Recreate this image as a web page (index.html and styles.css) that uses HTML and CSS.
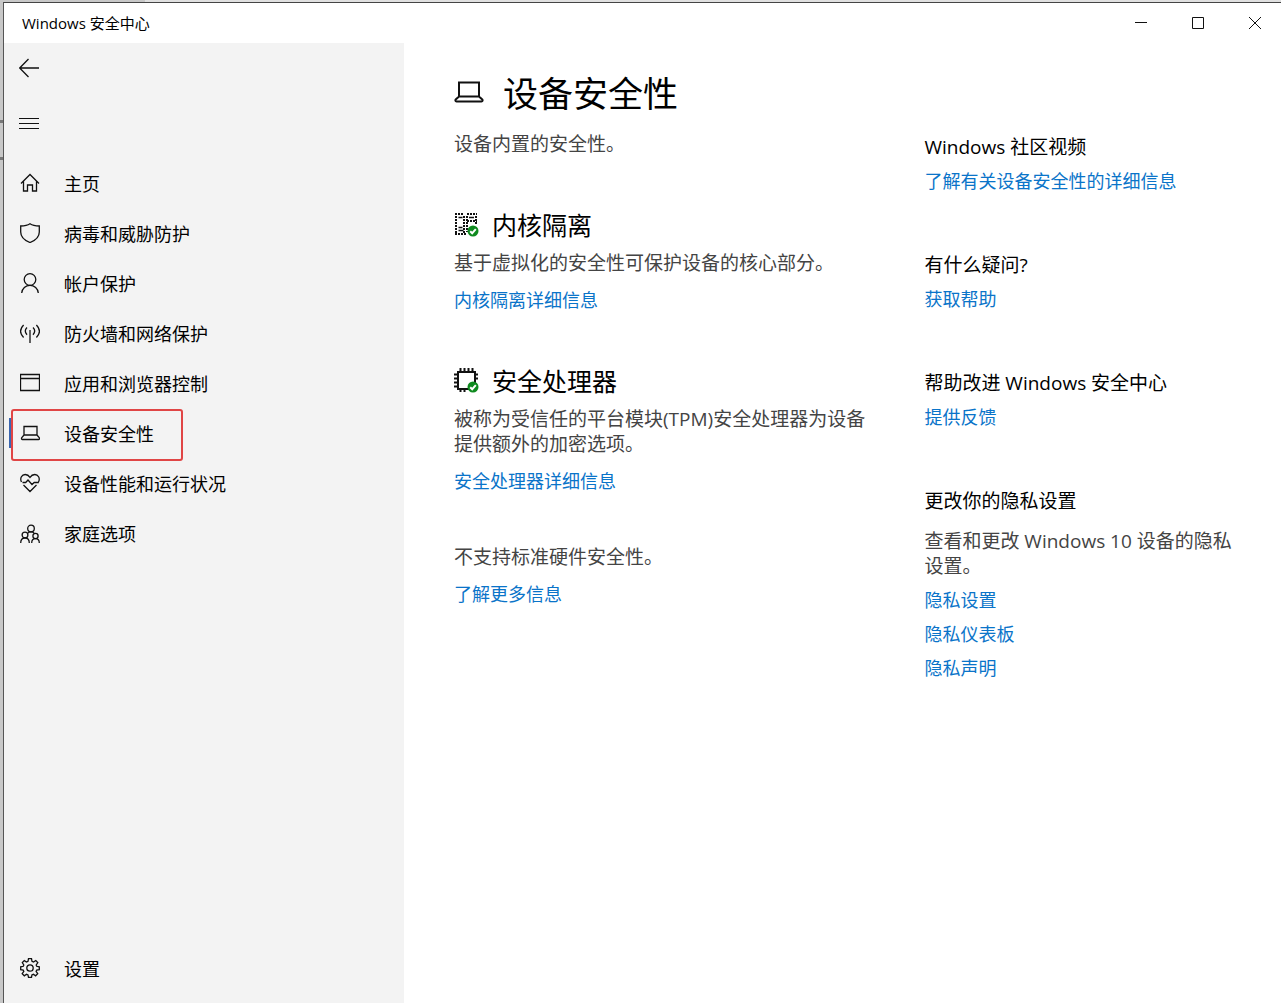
FILE: index.html
```html
<!DOCTYPE html>
<html lang="zh-CN">

<head>
  <meta charset="UTF-8" />
  <meta name="viewport" content="width=device-width, initial-scale=1.0" />
  <title>Windows 安全中心</title>
  <link rel="stylesheet" href="styles.css">
</head>

<body>
  <div class="backdrop"></div>
  <div class="window">
    <header class="titlebar">
      <span>Windows 安全中心</span>
      <div class="window-buttons">
        <button type="button" aria-label="最小化">
          <svg width="12" height="12" viewBox="0 0 12 12"><path d="M0 5.5h12" /></svg>
        </button>
        <button type="button" aria-label="最大化">
          <svg width="12" height="12" viewBox="0 0 12 12"><path d="M.5.5h11v11H.5z" /></svg>
        </button>
        <button type="button" aria-label="关闭">
          <svg width="12" height="12" viewBox="0 0 12 12"><path d="M0 0l12 12M12 0L0 12" /></svg>
        </button>
      </div>
    </header>

    <div class="content">
      <aside class="sidebar">
        <button type="button" class="tool" aria-label="返回">
          <svg width="20" height="20" viewBox="0 0 20 20"><path d="M20 10H1M9.500 1L.7 10l8.800 9" /></svg>
        </button>
        <button type="button" class="tool menu" aria-label="菜单">
          <svg width="20" height="20" viewBox="0 0 20 20"><path d="M0 5.500h20M0 10.500h20M0 15.500h20" /></svg>
        </button>

        <nav class="nav">
          <a href="#" class="nav-item">
            <svg width="20" height="20" viewBox="0 0 20 20"><path d="M1 10.500L10 1.500l9 9M3.500 8.500V18h4v-6h5v6h4V8.500" /></svg>
            <span>主页</span>
          </a>
          <a href="#" class="nav-item">
            <svg width="20" height="20" viewBox="0 0 20 20"><path d="M10 .8C7.500 2.500 4.500 3 .7 3v6c0 5 4 8.500 9.300 10.500 5.300-2 9.300-5.500 9.300-10.500V3c-3.800 0-6.800-.5-9.300-2.200z" /></svg>
            <span>病毒和威胁防护</span>
          </a>
          <a href="#" class="nav-item">
            <svg width="20" height="20" viewBox="0 0 20 20"><circle cx="10" cy="6.500" r="5.800" /><path d="M1.700 20c.3-4.500 4-7.700 8.300-7.700s8 3.200 8.300 7.700" /></svg>
            <span>帐户保护</span>
          </a>
          <a href="#" class="nav-item">
            <svg width="20" height="20" viewBox="0 0 20 20"><path d="M10 7v13M7 4.500c-2 2-2 5 0 7.200M13 4.500c2 2 2 5 0 7.200M3.600 2C-.3 6-.3 10.500 3.600 14.500M16.400 2c3.900 4 3.900 8.500 0 12.500" /></svg>
            <span>防火墙和网络保护</span>
          </a>
          <a href="#" class="nav-item">
            <svg width="20" height="20" viewBox="0 0 20 20"><path d="M.5 1.500h19v16H.5zM.5 5.500h19" /></svg>
            <span>应用和浏览器控制</span>
          </a>
          <a href="#" class="nav-item active" aria-current="page">
            <svg width="20" height="20" viewBox="0 0 20 20"><path d="M4 3.500h13v8.500H4zM4 12l-2.200 2.700c-.6.800-.2 1.800.7 1.800h16c.9 0 1.300-1 .7-1.800L17 12" /></svg>
            <span>设备安全性</span>
          </a>
          <a href="#" class="nav-item">
            <svg width="20" height="20" viewBox="0 0 20 20"><path d="M1.500 9C-.5 5 2 1.500 5.200 1.500c2.300 0 3.600 1 4.800 2.800 1.200-1.800 2.500-2.800 4.800-2.800C18 1.500 20.500 5 18.500 9M2.500 9.500h3.200L8 7l4 4.500 2.200-2h4.600M3.500 12l6.500 6.500 6.500-6.500" /></svg>
            <span>设备性能和运行状况</span>
          </a>
          <a href="#" class="nav-item">
            <svg width="20" height="20" viewBox="0 0 20 20"><circle cx="11" cy="5.500" r="3.300" /><circle cx="5" cy="12" r="2.900" /><circle cx="15.500" cy="13" r="2.600" /><path d="M.7 20c0-3 1.800-5 4.300-5s4.300 2 4.300 5M11.700 20c0-2.600 1.600-4.400 3.800-4.400s3.800 1.800 3.800 4.400M7.500 10.300c.7-.9 2-1.500 3.500-1.500s2.600.5 3.300 1.500" /></svg>
            <span>家庭选项</span>
          </a>
        </nav>

        <a href="#" class="nav-item settings">
          <svg width="20" height="20" viewBox="0 0 20 20"><circle cx="10" cy="10" r="3.200" /><path d="M8.500.7h3l.5 2.600 1.500.7 2.300-1.500 2 2L16.200 7l.5 1.300 2.600.5v2.800l-2.600.5-.6 1.400 1.600 2.200-2.100 2.100-2.200-1.500-1.500.6-.4 2.400h-3L8 16.900l-1.500-.6-2.200 1.500-2.100-2.100 1.600-2.200-.6-1.400-2.500-.5V8.800l2.600-.5L3.800 7 2.300 4.600l2-2L6.500 4 8 3.300z" /></svg>
          <span>设置</span>
        </a>
      </aside>

      <main class="main">
        <div class="details">
          <h1 class="page-title">
            <svg width="30" height="24" viewBox="0 0 30 24"><path d="M5 2.500h20v14H5zM5 16.500l-3.300 3c-.6.600-.4 2 .8 2h25c1.200 0 1.400-1.400.8-2l-3.300-3" /></svg>
            设备安全性
          </h1>
          <p class="intro">设备内置的安全性。</p>

          <section class="feature">
            <h2>
              <svg width="25" height="25" viewBox="0 0 25 25">
                <path class="dashes" d="M1 2h9M1 22h11M2 4v18M10 4v18M13 2h10M13 9h10M13 4v16M22 4v9" />
                <path d="M4.500 5.500h4M4.500 15.500h4M4.500 18.500h5M15 5.500h5" />
                <circle class="badge" cx="19" cy="19" r="5.500" />
                <path class="check" d="M16.200 19.200l2 2 3.600-4" />
              </svg>
              内核隔离
            </h2>
            <p>基于虚拟化的安全性可保护设备的核心部分。</p>
            <a href="#">内核隔离详细信息</a>
          </section>

          <section class="feature">
            <h2>
              <svg width="25" height="25" viewBox="0 0 25 25">
                <path class="chip" d="M4 4h17v17H4zM6.500 0v4M10.500 0v4M14.500 0v4M18.500 0v4M6.500 21v3M10.500 21v3M0 6.500h4M0 10.500h4M0 14.500h4M0 18.500h4M21 6.500h3M21 10.500h3" />
                <circle class="badge" cx="19" cy="19" r="5.500" />
                <path class="check" d="M16.200 19.200l2 2 3.600-4" />
              </svg>
              安全处理器
            </h2>
            <p>被称为受信任的平台模块(TPM)安全处理器为设备提供额外的加密选项。</p>
            <a href="#">安全处理器详细信息</a>
          </section>

          <section class="feature">
            <p>不支持标准硬件安全性。</p>
            <a href="#">了解更多信息</a>
          </section>
        </div>

        <div class="help">
          <section>
            <h3>Windows 社区视频</h3>
            <a href="#">了解有关设备安全性的详细信息</a>
          </section>
          <section>
            <h3>有什么疑问?</h3>
            <a href="#">获取帮助</a>
          </section>
          <section>
            <h3>帮助改进 Windows 安全中心</h3>
            <a href="#">提供反馈</a>
          </section>
          <section>
            <h3>更改你的隐私设置</h3>
            <p>查看和更改 Windows 10 设备的隐私设置。</p>
            <a href="#">隐私设置</a>
            <a href="#">隐私仪表板</a>
            <a href="#">隐私声明</a>
          </section>
        </div>
      </main>
    </div>
  </div>
</body>

</html>
```
FILE: styles.css
```css
*,
*::before,
*::after {
  box-sizing: border-box;
}

body {
  margin: 0;
  padding: 2px 0 0 3px;
  min-height: 100vh;
  display: flex;
  background-color: #c8c8c8;
  color: #000;
  font-family: "Open Sans", "Noto Sans CJK SC", sans-serif;
  font-size: 18px;
  line-height: 25px;
}

/* edge of the window behind */
.backdrop {
  position: absolute;
  top: 0;
  left: 0;
  width: 100%;
  height: 160px;
  border-bottom: 3px solid #777;
  background: linear-gradient(#777, #777) 0 120px / 3px 3px no-repeat,
    linear-gradient(#e0e0e0, #e0e0e0) 145px 0 no-repeat;
}

.window {
  position: relative;
  flex: 1;
  display: flex;
  flex-direction: column;
  border-top: 1px solid #444;
  border-left: 1px solid #555;
  background-color: #fff;
}

h1,
h2,
h3,
p {
  margin: 0;
  font-weight: 400;
}

a {
  color: #0a74c9;
  text-decoration: none;
}

button {
  padding: 0;
  border: 0;
  background: none;
}

svg {
  display: block;
  flex: none;
  fill: none;
  stroke: #111;
  stroke-width: 1.3;
}

.titlebar {
  display: flex;
  align-items: center;
  justify-content: space-between;
  height: 40px;
  padding: 0 15px 0 18px;
  font-size: 15px;
}

.window-buttons {
  display: flex;
  gap: 35px;
}

.window-buttons button {
  display: flex;
  align-items: center;
  justify-content: center;
  width: 22px;
  height: 40px;
}

.window-buttons svg {
  stroke-width: 1;
}

.content {
  flex: 1;
  display: flex;
}

.sidebar {
  display: flex;
  flex-direction: column;
  flex: none;
  width: 400px;
  padding-bottom: 9px;
  background-color: #f3f3f3;
}

.tool {
  width: 50px;
  height: 50px;
  padding-left: 15px;
}

.menu {
  margin-top: 5px;
}

.menu svg {
  stroke-width: 1;
}

.nav {
  margin-top: 11px;
}

.nav-item {
  position: relative;
  display: flex;
  align-items: center;
  gap: 24px;
  height: 50px;
  padding-left: 16px;
  color: #000;
}

.nav-item svg {
  margin-bottom: 2px;
}

.active::before {
  content: "";
  position: absolute;
  left: 5px;
  top: 9px;
  width: 4px;
  height: 30px;
  background-color: #3a66b0;
}

/* red frame round the current item */
.active::after {
  content: "";
  position: absolute;
  left: 7px;
  top: 0;
  width: 172px;
  height: 52px;
  border: 2px solid #e04545;
  border-radius: 3px;
}

.settings {
  margin-top: auto;
}

.main {
  flex: 1;
  display: grid;
  grid-template-columns: 4fr 3fr;
  gap: 55px;
  padding: 27px 45px 27px 50px;
}

.page-title {
  display: flex;
  align-items: center;
  gap: 19px;
  font-size: 35px;
  line-height: 48px;
}

.page-title svg {
  margin-bottom: 4px;
  stroke-width: 2;
}

.intro {
  margin-top: 14px;
}

.main p,
.help h3 {
  font-size: 19px;
}

.main p {
  color: #444;
}

.main a {
  display: block;
  width: fit-content;
}

.feature {
  margin-top: 51px;
}

.feature h2 {
  display: flex;
  align-items: center;
  gap: 13px;
  margin-bottom: 9px;
  font-size: 25px;
  line-height: 34px;
}

.feature h2 svg {
  margin-bottom: 2px;
}

.feature a {
  margin-top: 12px;
}

.dashes {
  stroke-width: 2;
  stroke-dasharray: 2 1;
}

.chip {
  stroke-width: 2;
}

.badge {
  fill: #0f8a1f;
  stroke: none;
}

.check {
  stroke: #fff;
  stroke-width: 2;
}

.help {
  padding-top: 65px;
}

.help section {
  margin-bottom: 59px;
}

.help a {
  margin-top: 9px;
}

.help p {
  margin-top: 15px;
}
```
